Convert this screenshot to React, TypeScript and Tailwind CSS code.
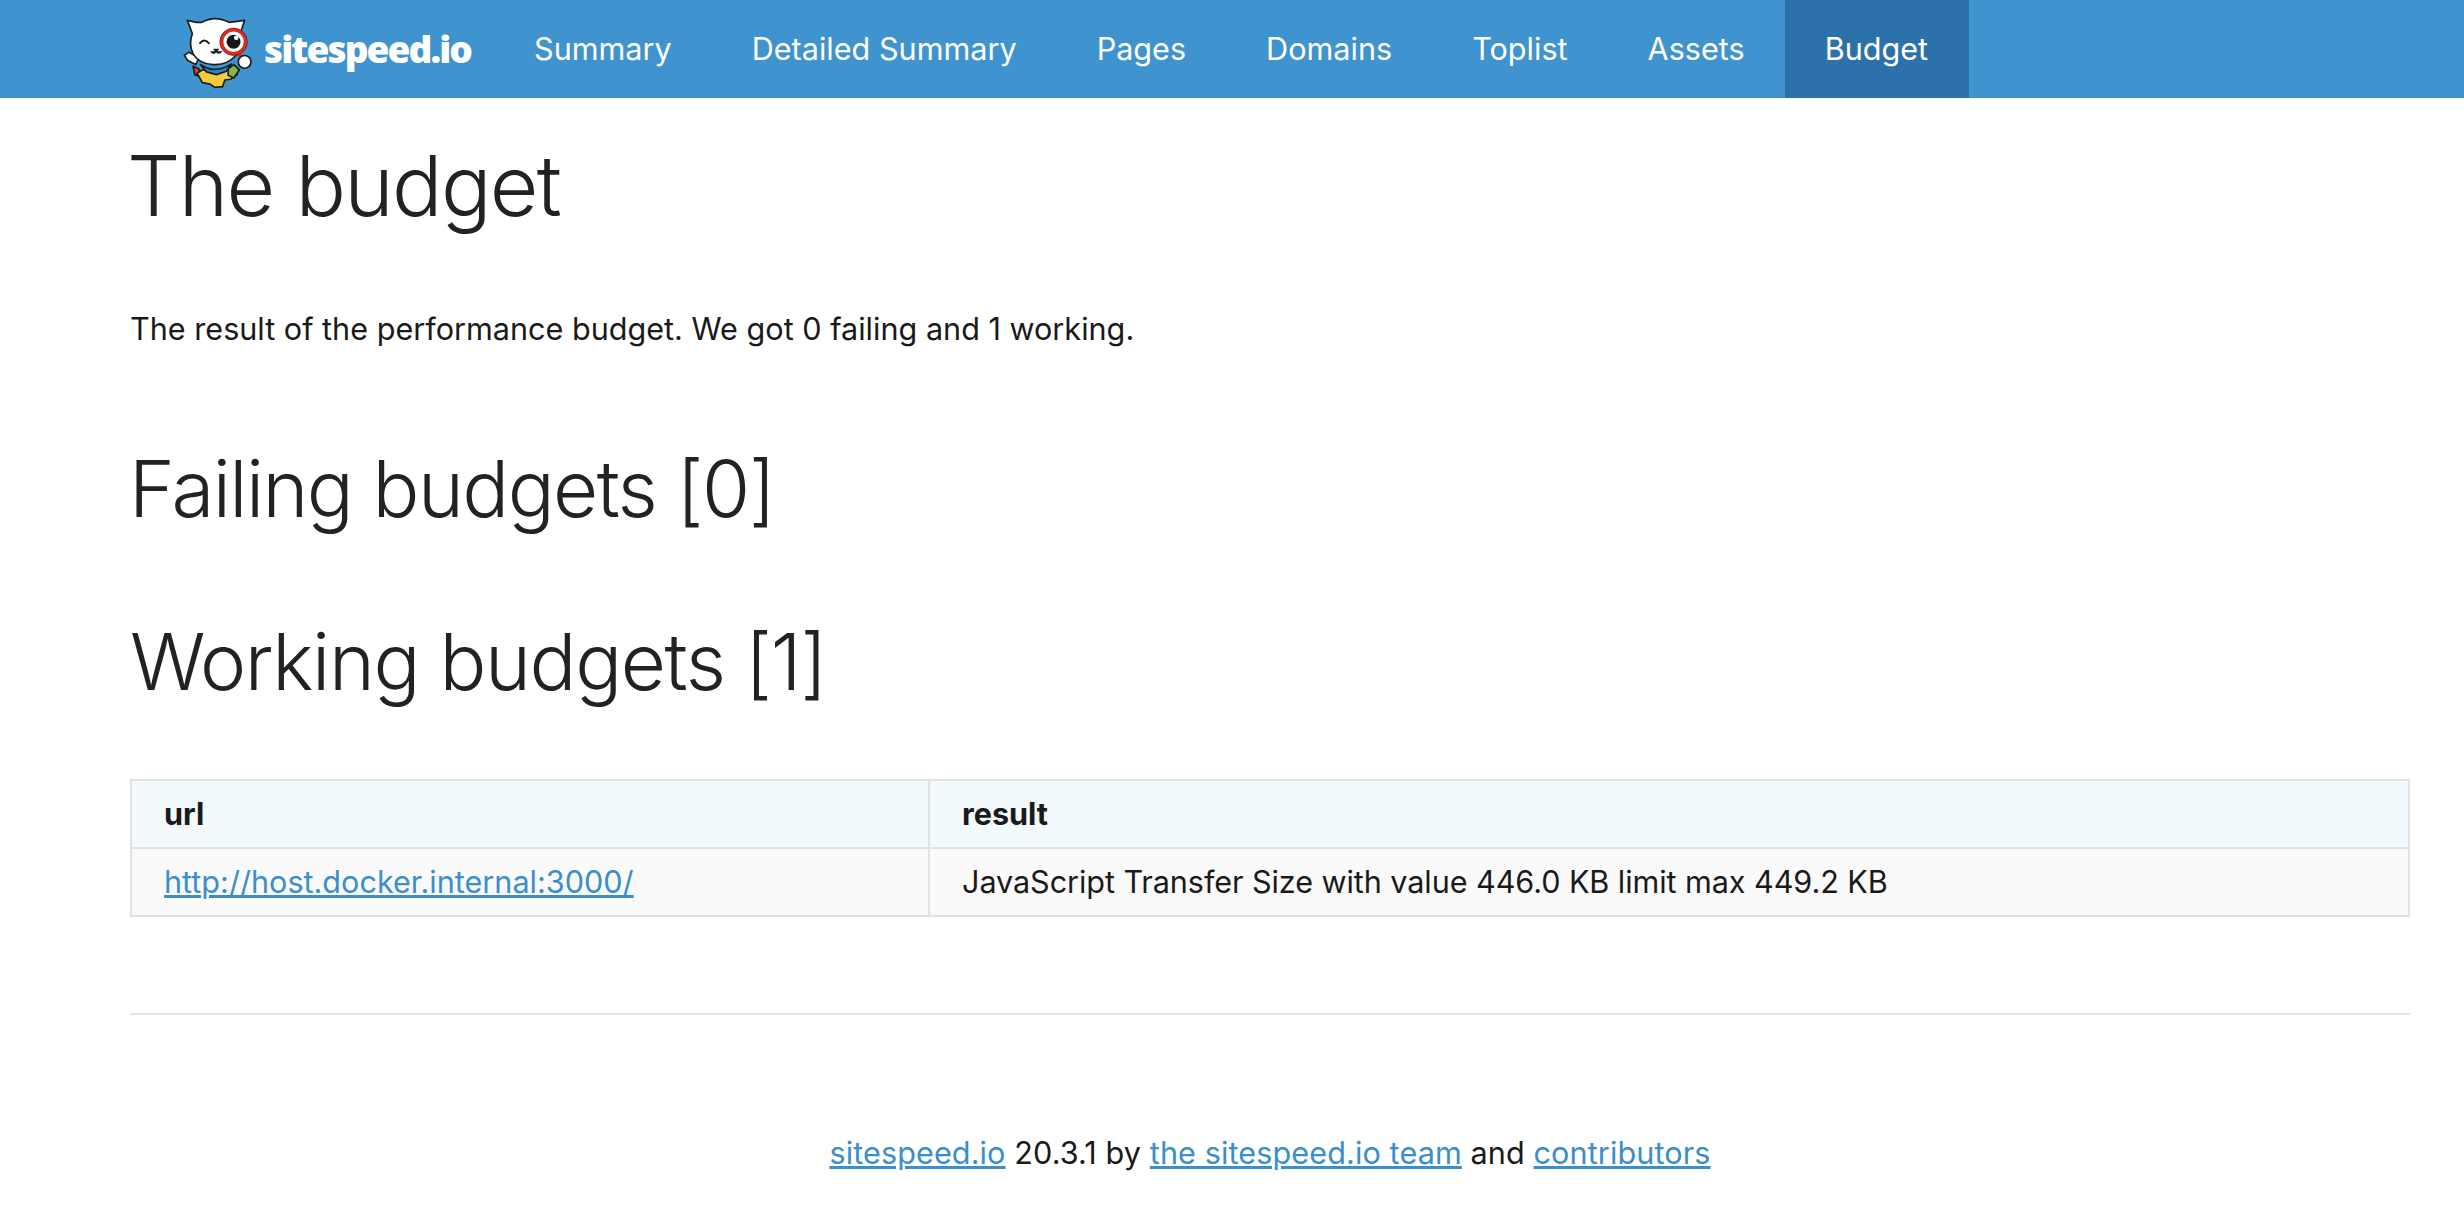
const font = { fontFamily: "Inter, 'Liberation Sans', sans-serif" };

function Logo() {
  return (
    <svg width="72" height="72" viewBox="70 50 215 215" className="shrink-0 self-start mt-[17px]">
      <g stroke="#1c1c1c" strokeWidth="5" strokeLinejoin="round">
        <path d="M118 205 L100 197 L105 222 L122 228 Z" fill="#e5392b" />
        <path d="M112 218 L128 208 L212 208 L232 222 L212 236 L195 238 L188 258 L165 260 L150 250 L128 246 Z" fill="#f4cb3c" />
        <path d="M205 205 L222 192 L238 208 L222 232 L205 224 Z" fill="#8db544" />
        <path d="M122 192 Q165 222 215 190 L200 212 L170 222 L140 214 Z" fill="#2f83c6" />
        <path d="M88 155 L74 164 L84 180 L108 192 L118 172 Z" fill="#fff" />
        <path d="M98 100 L83 60 L110 66 L126 66 Q165 44 208 66 L254 60 L240 102 Q252 135 228 165 Q200 195 160 192 Q118 190 100 160 Q86 130 98 100 Z" fill="#fff" />
      </g>
      <path d="M121 128 Q133 112 147 128" fill="none" stroke="#1c1c1c" strokeWidth="6" strokeLinecap="round" />
      <path d="M162 146 L176 146 L169 154 Z M153 152 Q160 164 169 154 Q176 164 186 152" fill="#1c1c1c" stroke="#1c1c1c" strokeWidth="3" strokeLinejoin="round" />
      <path d="M235 158 L250 178" stroke="#e3281d" strokeWidth="11" strokeLinecap="round" />
      <circle cx="221" cy="124" r="36" fill="#fff" stroke="#e3281d" strokeWidth="11" />
      <circle cx="221" cy="124" r="41" fill="none" stroke="#1c1c1c" strokeWidth="1.5" />
      <circle cx="221" cy="124" r="21" fill="#161616" />
      <circle cx="229" cy="112" r="7" fill="#fff" />
      <circle cx="254" cy="184" r="19" fill="#fff" stroke="#1c1c1c" strokeWidth="5" />
    </svg>
  );
}

const items = ["Summary", "Detailed Summary", "Pages", "Domains", "Toplist", "Assets", "Budget"];

export default function App() {
  return (
    <div className="bg-white min-h-[1208px] text-[30.6px] leading-[1.5] text-[#1a1a1a] overflow-hidden" style={font}>
      <nav className="h-[98px] bg-[#3f93ce] flex items-stretch pl-[183px] text-white">
        <div className="flex items-center w-[311px] gap-[9px]">
          <Logo />
          <span className="text-[37px] font-extrabold tracking-[-1.9px]" style={{ fontFamily: "'Open Sans', sans-serif" }}>sitespeed.io</span>
        </div>
        {items.map((t) => (
          <a key={t} className={"flex items-center px-[40px] " + (t === "Budget" ? "bg-[#2d71ab] pr-[41px]" : "")}>{t}</a>
        ))}
      </nav>
      <main className="mx-[130px] w-[2280px]">
        <h1 className="text-[84px] font-light leading-[1.2] mt-[38px] -ml-[3px] tracking-[-1.7px] text-[#222222]">The budget</h1>
        <p className="mt-[69px]">The result of the performance budget. We got 0 failing and 1 working.</p>
        <h2 className="text-[78px] font-light leading-[1.2] mt-[90px] -ml-[1px] tracking-[-1.6px] text-[#222222]">Failing budgets [0]</h2>
        <h2 className="text-[78px] font-light leading-[1.2] mt-[80px] tracking-[-1.4px] text-[#222222]">Working budgets [1]</h2>
        <table className="w-full mt-[70px] border-collapse border-2 border-[#dfe3e6]">
          <thead>
            <tr className="bg-[#f3fafd] h-[68px] border-b-2 border-[#dfe3e6]">
              <th className="w-[798px] text-left px-[32px] font-bold border-r-2 border-[#dfe3e6]">url</th>
              <th className="text-left px-[32px] font-bold">result</th>
            </tr>
          </thead>
          <tbody>
            <tr className="bg-[#fafafa] h-[68px]">
              <td className="px-[32px] border-r-2 border-[#dfe3e6]"><a className="text-[#3a8fca] underline">http://host.docker.internal:3000/</a></td>
              <td className="px-[32px] tracking-[-0.08px]">JavaScript Transfer Size with value 446.0 KB limit max 449.2 KB</td>
            </tr>
          </tbody>
        </table>
        <hr className="mt-[96px] border-t-2 border-[#e2e4e6]" />
        <footer className="text-center mt-[115px] tracking-[0.1px]">
          <a className="text-[#3a8fca] underline">sitespeed.io</a> 20.3.1 by <a className="text-[#3a8fca] underline">the sitespeed.io team</a> and <a className="text-[#3a8fca] underline">contributors</a>
        </footer>
      </main>
    </div>
  );
}
